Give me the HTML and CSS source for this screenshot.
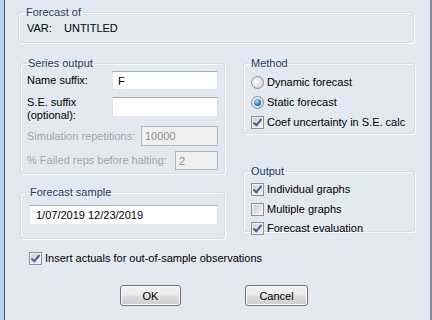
FILE: index.html
```html
<!DOCTYPE html>
<html lang="en">
<head>
  <meta charset="UTF-8">
  <title>Forecast</title>
  <link rel="stylesheet" href="styles.css">
</head>
<body>
  <div class="frame">
    <div class="dialog">
      <fieldset class="group forecast-of">
        <legend>Forecast of</legend>
        <div class="var-line"><span class="var-key">VAR:</span><span>UNTITLED</span></div>
      </fieldset>

      <div class="columns">
        <div class="col-left">
          <fieldset class="group series">
            <legend>Series output</legend>
            <div class="row row-name">
              <label>Name suffix:</label>
              <input class="field wide" type="text" value="F">
            </div>
            <div class="row row-se">
              <label>S.E. suffix<br>(optional):</label>
              <input class="field wide" type="text">
            </div>
            <div class="row row-sim disabled">
              <label>Simulation repetitions:</label>
              <input class="field sim" type="text" value="10000" disabled>
            </div>
            <div class="row row-fail disabled">
              <label>% Failed reps before halting:</label>
              <input class="field fail" type="text" value="2" disabled>
            </div>
          </fieldset>

          <fieldset class="group sample">
            <legend>Forecast sample</legend>
            <input class="field sample-field" type="text" value="1/07/2019 12/23/2019">
          </fieldset>
        </div>

        <div class="col-right">
          <fieldset class="group method">
            <legend>Method</legend>
            <div class="opt"><span class="radio"></span>Dynamic forecast</div>
            <div class="opt"><span class="radio on"></span>Static forecast</div>
            <div class="opt"><span class="check on"></span>Coef uncertainty in S.E. calc</div>
          </fieldset>

          <fieldset class="group output">
            <legend>Output</legend>
            <div class="opt"><span class="check on"></span>Individual graphs</div>
            <div class="opt"><span class="check"></span>Multiple graphs</div>
            <div class="opt"><span class="check on"></span>Forecast evaluation</div>
          </fieldset>
        </div>
      </div>

      <div class="opt actuals"><span class="check on"></span>Insert actuals for out-of-sample observations</div>

      <div class="buttons">
        <button class="btn ok">OK</button>
        <button class="btn cancel">Cancel</button>
      </div>
    </div>
  </div>
</body>
</html>
```

FILE: styles.css
```css
html, body {
  margin: 0;
  padding: 0;
}
body {
  font-family: "Liberation Sans", Arial, sans-serif;
  font-size: 11px;
  color: #000;
  background: #e3e9f1;
}
.frame {
  height: 320px;
  width: 432px;
  box-sizing: border-box;
  border-left: 4px solid #b9d1ea;
  background: #e3e9f1;
}
.dialog {
  height: 320px;
  box-sizing: border-box;
  border-left: 1px solid #435a76;
  border-right: 2px solid #7d8da2;
  padding-top: 6px;
}
.group {
  margin: 0;
  padding: 0 6px;
  border: 1px solid #d5dde6;
  border-radius: 3px;
  box-shadow: inset 1px 1px 0 #fbfcfd, 1px 1px 0 #fbfcfd;
  box-sizing: border-box;
}
.group legend {
  padding: 0 2px;
  margin-left: -1px;
  line-height: 13px;
  color: #1e3b66;
}
.forecast-of {
  margin-left: 13px;
  width: 396px;
  height: 37px;
}
.var-line {
  padding-left: 2px;
  margin-top: 3px;
  line-height: 13px;
}
.var-key {
  display: inline-block;
  width: 37px;
}
.columns {
  display: flex;
  gap: 18px;
  margin-top: 14px;
  margin-left: 15px;
}
.col-left {
  width: 205px;
  display: flex;
  flex-direction: column;
  gap: 12px;
}
.col-right {
  width: 172px;
  display: flex;
  flex-direction: column;
  gap: 31px;
}
.series {
  height: 117px;
}
.row {
  display: flex;
  justify-content: space-between;
  align-items: center;
  line-height: 13px;
}
.row-name {
  margin-top: 1px;
  height: 19px;
}
.row-se {
  margin-top: 6px;
  align-items: flex-start;
}
.row-se input {
  margin-top: 1px;
}
.row-sim {
  margin-top: 4px;
  height: 20px;
}
.row-fail {
  margin-top: 5px;
  height: 19px;
}
.disabled label {
  color: #a3a3a3;
}
.field {
  font-family: inherit;
  font-size: 11px;
  box-sizing: border-box;
  margin: 0;
  padding: 0 5px;
  border: 1px solid #abadb3;
  border-color: #abadb3 #dbdfe6 #e3e9ef #e2e3ea;
  background: #fff;
  color: #000;
  outline: none;
}
.wide {
  width: 106px;
  height: 19px;
}
.row-se .wide {
  height: 20px;
}
.sim {
  width: 77px;
  height: 20px;
  padding-left: 3px;
}
.fail {
  width: 43px;
  height: 19px;
  padding-left: 3px;
}
.field:disabled {
  background: #f0f0f0;
  color: #8f8f8f;
  border-color: #b0b8c4;
}
.sample {
  height: 53px;
  padding-left: 8px;
}
.sample-field {
  margin-top: 6px;
  width: 189px;
  height: 20px;
  padding-left: 6px;
}
.method {
  height: 77px;
}
.output {
  height: 67px;
}
.opt {
  display: flex;
  align-items: center;
  height: 20px;
  line-height: 13px;
}
.method .opt:first-of-type,
.output .opt:first-of-type {
  margin-top: 2px;
}
.method .opt {
  padding-left: 1px;
}
.output .opt {
  height: 19.5px;
  padding-left: 1px;
}
.radio,
.check {
  display: inline-block;
  width: 13px;
  height: 13px;
  margin-right: 3px;
  box-sizing: border-box;
  position: relative;
  flex: none;
}
.radio {
  border-radius: 50%;
  border: 1px solid #8e8f8f;
  background: radial-gradient(circle at 40% 40%, #fdfdfd, #d9d9d9 70%, #bcbcbc);
}
.radio.on::after {
  content: "";
  position: absolute;
  left: 2px;
  top: 2px;
  width: 7px;
  height: 7px;
  border-radius: 50%;
  background: radial-gradient(circle at 40% 35%, #a8e0fb, #2f7ec9 55%, #1a4f8f);
}
.check {
  border: 1px solid #8e8f8f;
  background: linear-gradient(135deg, #cbcfd5, #f6f6f6);
  box-shadow: inset 0 0 0 1px #f4f4f4;
}
.check.on::after {
  content: "";
  position: absolute;
  left: 3px;
  top: 0px;
  width: 3px;
  height: 7px;
  border-right: 2px solid #4a5f97;
  border-bottom: 2px solid #4a5f97;
  transform: rotate(40deg);
}
.actuals {
  margin-top: 12px;
  margin-left: 24px;
  height: 14px;
}
.buttons {
  display: flex;
  gap: 64px;
  margin-top: 20px;
  margin-left: 115px;
}
.btn {
  font-family: inherit;
  font-size: 11px;
  height: 21px;
  border: 1px solid #707070;
  border-radius: 3px;
  background: linear-gradient(#f2f2f2 0%, #ebebeb 48%, #dddddd 52%, #cfcfcf 100%);
  box-shadow: inset 0 0 0 1px #fcfcfc;
  color: #000;
  padding: 0;
}
.ok {
  width: 61px;
}
.cancel {
  width: 63px;
}
```
